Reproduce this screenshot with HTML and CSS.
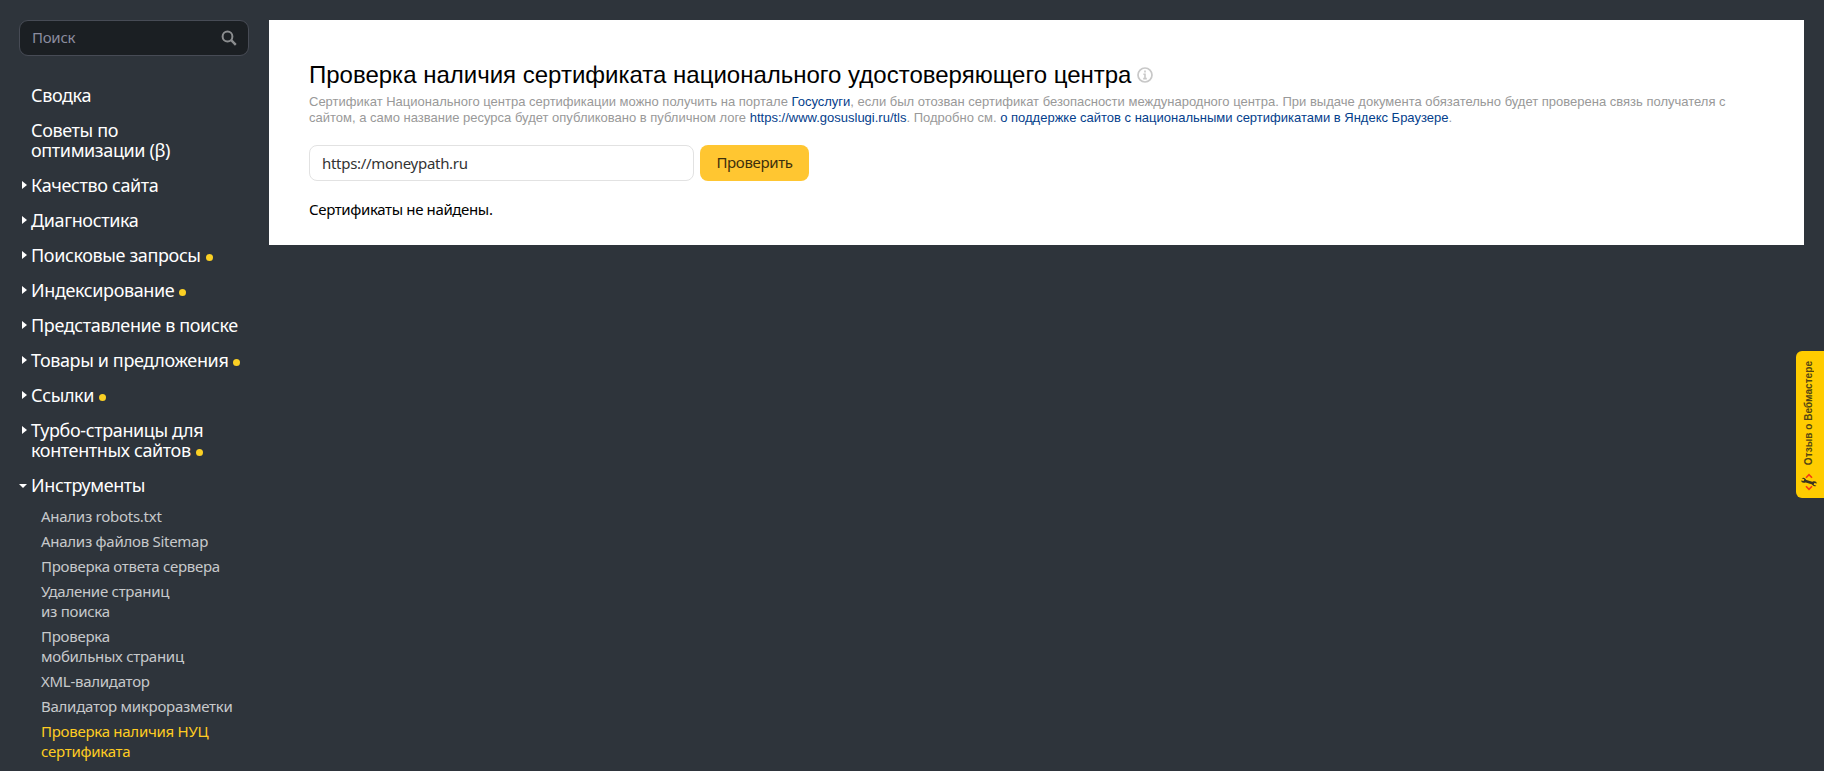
FILE: index.html
```html
<!DOCTYPE html>
<html lang="ru">

<head>
    <meta charset="UTF-8">
    <meta name="viewport" content="width=device-width, initial-scale=1">
    <title>Проверка наличия НУЦ сертификата</title>
    <link rel="stylesheet" href="styles.css">
</head>

<body>

    <!-- Боковое меню -->
    <aside class="sidebar">
        <div class="search">
            <input class="search-input" type="text" placeholder="Поиск">
            <svg class="search-icon" width="16" height="16" viewBox="0 0 16 16" fill="none" stroke="#8b8d8f">
                <circle cx="6.5" cy="6.5" r="4.9" stroke-width="2" />
                <path d="M10.2 10.2L14.8 14.8" stroke-width="2.4" />
            </svg>
        </div>

        <nav class="menu">
            <a class="menu-item">Сводка</a>
            <a class="menu-item">Советы по<br>оптимизации (β)</a>
            <a class="menu-item closed">Качество сайта</a>
            <a class="menu-item closed">Диагностика</a>
            <a class="menu-item closed">Поисковые запросы<i class="dot"></i></a>
            <a class="menu-item closed">Индексирование<i class="dot"></i></a>
            <a class="menu-item closed">Представление в поиске</a>
            <a class="menu-item closed">Товары и предложения<i class="dot"></i></a>
            <a class="menu-item closed">Ссылки<i class="dot"></i></a>
            <a class="menu-item closed">Турбо-страницы для<br>контентных сайтов<i class="dot"></i></a>
            <a class="menu-item opened">Инструменты</a>
        </nav>

        <nav class="submenu">
            <a class="submenu-item">Анализ robots.txt</a>
            <a class="submenu-item">Анализ файлов Sitemap</a>
            <a class="submenu-item">Проверка ответа сервера</a>
            <a class="submenu-item">Удаление страниц<br>из поиска</a>
            <a class="submenu-item">Проверка<br>мобильных страниц</a>
            <a class="submenu-item">XML-валидатор</a>
            <a class="submenu-item">Валидатор микроразметки</a>
            <a class="submenu-item active">Проверка наличия НУЦ<br>сертификата</a>
        </nav>
    </aside>

    <!-- Содержимое -->
    <main class="content">
        <h1 class="title">Проверка наличия сертификата национального удостоверяющего центра
            <svg class="info" width="16" height="16" viewBox="0 0 16 16" fill="none" stroke="#c8c8c8">
                <circle cx="8" cy="8" r="7" stroke-width="1.7" />
                <path d="M8 3.6v1.9M6.4 7.3H8v4.2M6.2 11.6h3.6" stroke-width="1.6" />
            </svg>
        </h1>
        <p class="description">Сертификат Национального центра сертификации можно получить на портале <a class="link">Госуслуги</a>, если был отозван сертификат безопасности международного центра. При выдаче документа обязательно будет проверена связь получателя с сайтом, а само название ресурса будет опубликовано в публичном логе <a class="link">https://www.gosuslugi.ru/tls</a>. Подробно см. <a class="link">о поддержке сайтов с национальными сертификатами в Яндекс Браузере</a>.</p>
        <form class="form">
            <input class="url-input" type="text" value="https://moneypath.ru">
            <button class="button" type="button">Проверить</button>
        </form>
        <p class="result">Сертификаты не найдены.</p>
    </main>

    <!-- Кнопка отзыва -->
    <div class="feedback">
        <span class="feedback-text">Отзыв о Вебмастере</span>
        <svg width="18" height="18" viewBox="0 0 18 18" fill="none">
            <path d="M6 4.8L9 1.6L12 4.8M6 13.2L9 16.4L12 13.2" stroke="#f33b12" stroke-width="1.6" />
            <path d="M4.5 7.7L13.5 10.6" stroke="#3b3420" stroke-width="2.6" />
            <path d="M1.6 5.3L4.3 6.2L3.7 8.1L1.1 7.6C1.5 9.6 3.3 10.4 5.3 9.4L6.2 7.2C5.5 4.9 3.4 4.1 1.6 5.3Z" fill="#3b3420" />
            <path d="M16.4 12.7L13.7 11.8L14.3 9.9L16.9 10.4C16.5 8.4 14.7 7.6 12.7 8.6L11.8 10.8C12.5 13.1 14.6 13.9 16.4 12.7Z" fill="#3b3420" />
        </svg>
    </div>

</body>

</html>
```
FILE: styles.css
```css
* {
    margin: 0;
    padding: 0;
    box-sizing: border-box;
}

body {
    display: flex;
    align-items: flex-start;
    height: 771px;
    overflow: hidden;
    padding: 20px 20px 0 19px;
    background: #2e343b;
    font-family: "Noto Sans", sans-serif;
    font-size: 15px;
    line-height: 20px;
    letter-spacing: -0.27px;
}

.sidebar {
    width: 230px;
    margin-right: 20px;
    flex-shrink: 0;
}

.search {
    display: flex;
    align-items: center;
    height: 36px;
    padding: 0 11px 0 12px;
    background: #1b1f23;
    border: 1px solid #474b55;
    border-radius: 9px;
}

.search-input {
    flex: 1;
    min-width: 0;
    padding-bottom: 2px;
    background: none;
    border: none;
    outline: none;
    font: inherit;
    letter-spacing: inherit;
}

.search-input::placeholder {
    color: #8b8c9f;
}

.menu {
    display: flex;
    flex-direction: column;
    gap: 15px;
    margin-top: 29px;
    padding-left: 12px;
}

.menu-item {
    position: relative;
    color: #fff;
    font-size: 18px;
    letter-spacing: -0.38px;
    white-space: nowrap;
}

.closed::before,
.opened::before {
    content: '';
    position: absolute;
    border: 4px solid transparent;
}

.closed::before {
    left: -9px;
    top: 6px;
    border-left: 5px solid #fff;
    border-right: none;
}

.opened::before {
    left: -12px;
    top: 9px;
    border-top: 4px solid #fff;
    border-bottom: none;
}

.dot {
    display: inline-block;
    width: 7px;
    height: 7px;
    margin-left: 5px;
    border-radius: 50%;
    background: #fbd024;
    vertical-align: 1px;
}

.submenu {
    display: flex;
    flex-direction: column;
    gap: 5px;
    margin-top: 11px;
    padding-left: 22px;
}

.submenu-item {
    color: #c7c9cb;
    white-space: nowrap;
}

.active {
    color: #fc2;
}

.content {
    flex: 1;
    height: 225px;
    padding: 41px 70px 0 40px;
    background: #fff;
}

.title {
    display: flex;
    align-items: center;
    gap: 6px;
    font: 24px/28px "Liberation Sans", Arial, sans-serif;
    letter-spacing: 0;
}

.description {
    margin-top: 5px;
    color: #999;
    font: 13px/16px "Liberation Sans", Arial, sans-serif;
    letter-spacing: 0;
}

.link {
    color: #04408c;
}

.form {
    display: flex;
    gap: 6px;
    margin-top: 19px;
}

.url-input {
    width: 385px;
    height: 36px;
    padding: 0 12px;
    border: 1px solid #e2e2e2;
    border-radius: 8px;
    color: #333;
    font: inherit;
    letter-spacing: -0.3px;
}

.button {
    width: 109px;
    height: 36px;
    padding-bottom: 3px;
    background: #ffc631;
    border: none;
    border-radius: 8px;
    color: #3d300c;
    font: inherit;
    letter-spacing: -0.35px;
}

.result {
    margin-top: 18px;
    letter-spacing: -0.36px;
}

.feedback {
    position: fixed;
    right: 0;
    top: 351px;
    display: flex;
    flex-direction: column;
    align-items: center;
    justify-content: space-between;
    width: 28px;
    height: 147px;
    padding: 10px 3px 7px 0;
    background: #fc0;
    border-radius: 6px 0 0 6px;
}

.feedback-text {
    writing-mode: vertical-rl;
    transform: rotate(180deg);
    color: #544613;
    font: bold 10px/12px "Liberation Sans", Arial, sans-serif;
    letter-spacing: 0.05px;
}
```
